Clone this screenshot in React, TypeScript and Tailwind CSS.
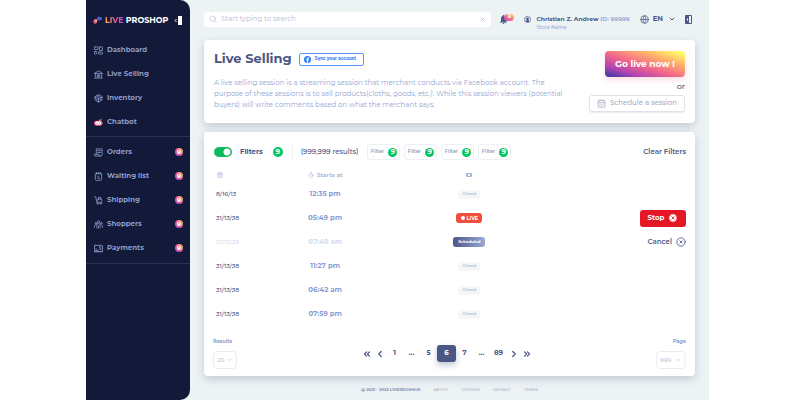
import { useState, type ReactNode } from "react";
import {
  CalendarDays,
  ChevronDown,
  ChevronLeft,
  ChevronRight,
  ChevronsLeft,
  ChevronsRight,
  CircleX,
  Globe,
  Search,
  Timer,
  X,
} from "lucide-react";

function Glyph({ children }: { children: ReactNode }) {
  return (
    <svg
      viewBox="0 0 20 20"
      className="size-[9px] shrink-0"
      fill="none"
      stroke="currentColor"
      strokeWidth="1.8"
      strokeLinecap="round"
      strokeLinejoin="round"
      aria-hidden="true"
    >
      {children}
    </svg>
  );
}

const icons = {
  dashboard: (
    <Glyph>
      <rect x="1" y="2" width="8" height="6" rx="1" />
      <rect x="12" y="2" width="7" height="8" rx="1" />
      <rect x="1" y="12" width="5" height="6" rx="1" />
      <rect x="10" y="13.500" width="9" height="4.500" rx="1" />
    </Glyph>
  ),
  selling: (
    <Glyph>
      <path d="M1 7.500 10 2l9 5.500H1ZM3 8v8M17 8v8M1 18h18M7 16v-5h6v5M10 11v5" />
    </Glyph>
  ),
  inventory: (
    <Glyph>
      <path d="M10 2 2.500 5.500v8L10 18l7.500-4.500v-8L10 2ZM1 7l9 3 9-3M10 10v8M6 4l8 4M5 12l2 1M13 13l2-1" />
    </Glyph>
  ),
  orders: (
    <Glyph>
      <path d="M5 14V2h13v13a3 3 0 0 1-3 3H4a3 3 0 0 1-3-3v-1h10v1a3 3 0 0 0 3 3M8 6h7M8 10h7" />
    </Glyph>
  ),
  waiting: (
    <Glyph>
      <rect x="3" y="3" width="14" height="15.500" rx="2" />
      <path d="M6 1v4M10 1v3M14 1v4M9 9v5h4" />
    </Glyph>
  ),
  shipping: (
    <Glyph>
      <path d="M1 2h3l2 12h12M8 11V7h9v4M10 7V3h5v4" />
      <circle cx="8" cy="17" r="1.500" />
      <circle cx="15" cy="17" r="1.500" />
    </Glyph>
  ),
  shoppers: (
    <Glyph>
      <circle cx="10" cy="4" r="2.500" />
      <circle cx="4" cy="7" r="1.500" />
      <circle cx="16" cy="7" r="1.500" />
      <path d="M6.500 18v-7a3.500 3.500 0 0 1 7 0v7M1 16v-3a3 3 0 0 1 4-3M19 16v-3a3 3 0 0 0-4-3M10 13v5" />
    </Glyph>
  ),
  payments: (
    <Glyph>
      <rect x="1" y="3" width="18" height="14" rx="1.500" />
      <path d="M4 14h5M4 11.500h2M15 6h-2.500v3H15v3h-2.500M1 17h18" />
    </Glyph>
  ),
  chatbot: (
    <svg viewBox="0 0 20 20" className="size-[9px] shrink-0" aria-hidden="true">
      <path d="M11 6 12 3l2 1 3-3-1 5-3 2Z" fill="#c98a3c" />
      <rect x="0" y="6" width="19" height="11" rx="5.500" fill="#ef5f7d" />
      <rect x="3" y="8" width="13" height="7" rx="3.500" fill="#fff" />
      <circle cx="7" cy="11.500" r="1.200" fill="#d7459a" />
      <circle cx="12" cy="11.500" r="1.200" fill="#d7459a" />
    </svg>
  ),
};

const primaryNav = [
  { label: "Dashboard", icon: icons.dashboard },
  { label: "Live Selling", icon: icons.selling },
  { label: "Inventory", icon: icons.inventory },
  { label: "Chatbot", icon: icons.chatbot },
];

const secondaryNav = [
  { label: "Orders", icon: icons.orders },
  { label: "Waiting list", icon: icons.waiting },
  { label: "Shipping", icon: icons.shipping },
  { label: "Shoppers", icon: icons.shoppers },
  { label: "Payments", icon: icons.payments },
];

type Status = "closed" | "live" | "scheduled";

const sessions: { date: string; time: string; status: Status }[] = [
  { date: "8/16/13", time: "12:35 pm", status: "closed" },
  { date: "31/13/38", time: "05:49 pm", status: "live" },
  { date: "31/13/38", time: "07:40 am", status: "scheduled" },
  { date: "31/13/38", time: "11:27 pm", status: "closed" },
  { date: "31/13/38", time: "06:42 am", status: "closed" },
  { date: "31/13/38", time: "07:59 pm", status: "closed" },
];

function NavItem({ label, icon, count }: { label: string; icon: ReactNode; count?: number }) {
  return (
    <li>
      <a href="#" className="flex h-6 items-center gap-1 pr-[7px] pl-2 text-[7px] font-bold text-[#8b9bc7]">
        {icon}
        <span>{label}</span>
        {count !== undefined && (
          <span className="ml-auto flex size-2 items-center justify-center rounded-full bg-linear-to-bl from-[#ffc65c] via-[#f2679a] to-[#9a3fc0] text-[6px] font-extrabold text-white">
            {count}
          </span>
        )}
      </a>
    </li>
  );
}

function Sidebar() {
  return (
    <aside className="w-[104px] shrink-0 rounded-r-[10px] bg-[#131939]">
      <div className="flex h-[38px] items-center gap-[3px] pt-[2px] pr-2 pl-[7px]">
        <svg viewBox="0 0 20 16" className="h-2 w-[9px] shrink-0" aria-hidden="true">
          <path d="M10 1h6a4 4 0 0 1 0 8h-4a3 3 0 0 1-3-3Z" fill="#4a59d8" />
          <path d="M1 10a3 3 0 0 1 3-3h5v4a4 4 0 0 1-8 2Z" fill="#f2668b" />
          <path d="M4 7h5v4c-3 0-5-1-5-4Z" fill="#ffb45c" />
        </svg>
        <span className="text-[8px] font-bold whitespace-nowrap text-white">
          <span className="bg-linear-to-r from-[#ffb45c] via-[#f2668b] to-[#b83fd0] bg-clip-text text-transparent">
            LIVE
          </span>{" "}
          PROSHOP
        </span>
        <button type="button" aria-label="Collapse menu" className="ml-auto flex items-center">
          <svg viewBox="0 0 8 9" className="h-[9px] w-2" aria-hidden="true">
            <path d="M2.500 3 1 4.500 2.500 6" fill="none" stroke="#fff" />
            <path d="M4 0h4v9H4Z" fill="#fff" />
          </svg>
        </button>
      </div>
      <nav aria-label="Main">
        <ul className="border-b border-[#2a3158] pb-[2px]">
          {primaryNav.map((item) => (
            <NavItem key={item.label} {...item} />
          ))}
        </ul>
        <ul className="border-b border-[#2a3158] pt-[3px] pb-[3px]">
          {secondaryNav.map((item) => (
            <NavItem key={item.label} {...item} count={9} />
          ))}
        </ul>
      </nav>
    </aside>
  );
}

function TopBar() {
  const [query, setQuery] = useState("");
  return (
    <header className="flex items-center">
      <div className="flex h-4 grow items-center gap-1 rounded-[3px] bg-white px-[5px] shadow-[inset_0_1px_1px_rgba(0,0,0,0.06)]">
        <Search className="size-2 text-[#b4bdd0]" />
        <input
          type="text"
          aria-label="Search"
          placeholder="Start typing to search"
          value={query}
          onChange={(event) => setQuery(event.target.value)}
          className="min-w-0 grow bg-transparent text-[7px] text-[#4c5685] outline-none placeholder:text-[#b4bdd0]"
        />
        <button type="button" aria-label="Clear search" onClick={() => setQuery("")}>
          <X className="size-[7px] text-[#a3aec8]" />
        </button>
      </div>
      <button type="button" aria-label="Notifications" className="relative ml-2 flex w-4">
        <svg viewBox="0 0 16 18" className="size-[9px]" fill="#4c5685" aria-hidden="true">
          <path d="M8 0a1.500 1.500 0 0 1 1.500 2A5 5 0 0 1 13 7v5l2.500 3H.5L3 12V7a5 5 0 0 1 3.500-5A1.500 1.500 0 0 1 8 0ZM6 16h4a2 2 0 0 1-4 0Z" />
        </svg>
        <span className="absolute -top-px left-[5px] flex h-[7px] w-[10px] items-center justify-center rounded-full bg-linear-to-bl from-[#ffd45c] via-[#f7778c] to-[#b93fc0] text-[5px] font-bold text-white">
          9
        </span>
      </button>
      <div className="ml-[9px] flex items-center gap-[5px]">
        <svg viewBox="0 0 14 14" className="size-[7px]" fill="none" stroke="#4c5685" strokeWidth="1.5" aria-hidden="true">
          <circle cx="7" cy="7" r="6" />
          <circle cx="7" cy="6" r="2" fill="#4c5685" />
          <path d="M5 12V9h4v3" fill="#4c5685" />
        </svg>
        <div className="relative text-[6px] leading-2 font-bold whitespace-nowrap text-[#4c5685]">
          Christian Z. Andrew <span className="text-[#9aabd6]">ID: 99999</span>
          <div className="absolute top-2 left-0 text-[5px] font-medium text-[#9aabd6]">Store Name</div>
        </div>
      </div>
      <button type="button" className="ml-[10px] flex items-center gap-1 text-[7px] font-bold text-[#4c5685]">
        <Globe className="size-[9px]" />
        EN
        <ChevronDown className="ml-px size-2" strokeWidth={3} />
      </button>
      <button type="button" aria-label="Log out" className="mr-[3px] ml-[9px]">
        <svg viewBox="0 0 14 18" className="h-[9px] w-[7px]" aria-hidden="true">
          <path d="M1 1h12v16H1Z" fill="none" stroke="#4c5685" strokeWidth="2" />
          <path d="M1 1h7v16H1Z" fill="#4c5685" />
          <path d="M5 7v4" stroke="#fff" strokeWidth="2" />
        </svg>
      </button>
    </header>
  );
}

function Intro() {
  return (
    <section className="mt-[13px] flex h-[83px] justify-between rounded-[4px] bg-white px-[10px] pt-[11px] shadow-[0_3px_8px_rgba(40,60,80,0.22)]">
      <div className="w-[355px]">
        <div className="flex h-4 items-center gap-[7px]">
          <h1 className="text-[13px] font-bold text-[#4c5685]">Live Selling</h1>
          <button
            type="button"
            className="flex h-[13px] w-[65px] items-center gap-1 rounded-[2px] border border-[#5b97f8] pl-1 font-['Roboto',sans-serif] text-[5px] font-bold whitespace-nowrap text-[#2f7cf6]"
          >
            <svg viewBox="0 0 16 16" className="size-[7px] shrink-0" aria-hidden="true">
              <circle cx="8" cy="8" r="8" fill="#2f7cf6" />
              <path d="M7 16v-6H5V7.500h2V6q0-3 3-3h1.500v2H10q-1 0-1 1v1.500h2.300L11 10H9v6Z" fill="#fff" />
            </svg>
            Sync your account
          </button>
        </div>
        <p className="mt-[10px] text-[7px] leading-[11px] text-[#93a5d3]">
          A live selling session is a streaming session that merchant conducts via Facebook account. The
          purpose of these sessions is to sell products(cloths, goods, etc.). While this session viewers
          (potential buyers) will write comments based on what the merchant says.
        </p>
      </div>
      <div className="flex flex-col items-end">
        <button
          type="button"
          className="h-[26px] w-20 rounded-[4px] bg-[linear-gradient(to_top_right,#2b3a9e_0%,#b043b4_22%,#f2668a_45%,#ffb36b_72%,#fdff66_95%)] text-[9px] font-bold text-white shadow-[0_3px_6px_rgba(255,120,130,0.25)]"
        >
          Go live now !
        </button>
        <span className="text-[8px] leading-[18px] font-medium text-[#4c5685]">or</span>
        <button
          type="button"
          className="flex h-[17px] shrink-0 items-center gap-1 rounded-[3px] border border-[#dfe2e9] px-[7px] text-[7px] font-medium whitespace-nowrap text-[#a4acbf] shadow-[0_1px_1px_rgba(0,0,0,0.08)]"
        >
          <CalendarDays className="size-[9px]" />
          Schedule a session
        </button>
      </div>
    </section>
  );
}

function StatusBadge({ status }: { status: Status }) {
  if (status === "live") {
    return (
      <span className="inline-flex h-[10px] w-[26px] items-center justify-center gap-[2px] rounded-[3px] bg-[#f04e3e] text-[5px] font-bold text-white">
        <span className="size-1 rounded-full bg-white" />
        LIVE
      </span>
    );
  }
  if (status === "scheduled") {
    return (
      <span className="inline-flex h-[10px] w-8 items-center justify-center rounded-[3px] bg-linear-to-r from-[#4c5685] to-[#9aabd6] text-[4px] font-bold text-white">
        Scheduled
      </span>
    );
  }
  return (
    <span className="inline-flex h-[9px] w-[22px] items-center justify-center rounded-[2px] bg-[#f6f6f7] text-[4px] font-semibold text-[#b9bdc6]">
      Closed
    </span>
  );
}

function Filters() {
  const [on, setOn] = useState(true);
  return (
    <div className="flex h-[18px] items-center text-[#4c5685]">
      <label className="flex items-center gap-2 pl-px text-[7px] font-bold">
        <input
          type="checkbox"
          checked={on}
          onChange={() => setOn(!on)}
          className="h-[10px] w-[18px] appearance-none rounded-full bg-[#b9c1d3] bg-[radial-gradient(circle_at_5px_5px,white_3px,transparent_4px)] checked:bg-[#0cbb5e] checked:bg-[radial-gradient(circle_at_13px_5px,white_3px,transparent_4px)]"
        />
        Filters
      </label>
      <span className="ml-[10px] flex size-[10px] items-center justify-center rounded-full bg-[#02c660] text-[7px] font-bold text-white">
        9
      </span>
      <span className="ml-[9px] border-l border-[#f0f2f6] py-[3px] pl-2 text-[7px] leading-3 font-medium">
        (999,999 results)
      </span>
      <div className="ml-[9px] flex gap-1">
        {[1, 2, 3, 4].map((id) => (
          <button
            key={id}
            type="button"
            className="flex h-4 w-[33px] items-center justify-center gap-1 rounded-[3px] border border-[#eef0f4] text-[5px] font-semibold text-[#939db8]"
          >
            Filter
            <span className="flex size-[9px] items-center justify-center rounded-full bg-[#02c660] text-[7px] font-bold text-white">
              9
            </span>
          </button>
        ))}
      </div>
      <button type="button" className="ml-auto text-[7px] font-semibold">
        Clear Filters
      </button>
    </div>
  );
}

function SessionTable() {
  return (
    <table className="mt-[6px] w-full table-fixed">
      <colgroup>
        <col className="w-[14%]" />
        <col className="w-[19%]" />
        <col className="w-[42%]" />
        <col className="w-[25%]" />
      </colgroup>
      <thead>
        <tr className="h-[15px] text-[6px] leading-2 text-[#a0b1da]">
          <th scope="col" className="p-0 pl-1 align-middle" aria-label="Date">
            <CalendarDays className="size-[6px]" />
          </th>
          <th scope="col" className="p-0 pl-[2px] align-middle font-semibold">
            <span className="flex items-center justify-center gap-[3px]">
              <Timer className="size-[6px]" />
              Starts at
            </span>
          </th>
          <th scope="col" className="p-0 pl-[2px] align-middle" aria-label="Status">
            <svg viewBox="0 0 12 8" className="mx-auto h-1 w-[6px]" fill="none" stroke="#a0b1da" strokeWidth="2" aria-hidden="true">
              <rect x="1" y="1" width="10" height="6" rx="1" />
              <path d="M3 1v6M9 1v6" />
            </svg>
          </th>
          <td />
        </tr>
      </thead>
      <tbody>
        {sessions.map((session, index) => (
          <tr
            key={index}
            className={
              session.status === "scheduled"
                ? "h-6 text-[#d5dcec]"
                : "h-6 text-[#4c5685]"
            }
          >
            <td className="p-0 pl-[3px] align-middle text-[6px] leading-2 font-medium">{session.date}</td>
            <td
              className={
                session.status === "scheduled"
                  ? "p-0 pl-[2px] text-center align-middle text-[7px] leading-2 font-bold"
                  : "p-0 pl-[2px] text-center align-middle text-[7px] leading-2 font-bold text-[#8ba0d0]"
              }
            >
              {session.time}
            </td>
            <td className="p-0 pl-[2px] text-center align-middle text-[5px] leading-none">
              <StatusBadge status={session.status} />
            </td>
            <td className="p-0 align-middle">
              {session.status === "live" && (
                <button
                  type="button"
                  className="ml-auto flex h-[17px] w-[46px] items-center justify-center gap-1 rounded-[3px] bg-[#e61725] text-[7px] font-bold text-white"
                >
                  Stop
                  <CircleX className="size-[10px] fill-white stroke-[#e61725]" />
                </button>
              )}
              {session.status === "scheduled" && (
                <button
                  type="button"
                  className="ml-auto flex items-center gap-1 text-[7px] font-semibold text-[#4c5685]"
                >
                  Cancel
                  <CircleX className="size-[10px]" />
                </button>
              )}
            </td>
          </tr>
        ))}
      </tbody>
    </table>
  );
}

const pages = ["1", "...", "5", "6", "7", "...", "89"];

function Pagination() {
  return (
    <nav aria-label="Pagination" className="flex h-[17px] items-center text-[7px] font-bold text-[#4c5685]">
      <button type="button" aria-label="First page" className="flex w-[13px] justify-center">
        <ChevronsLeft className="size-[10px]" strokeWidth={3} />
      </button>
      <button type="button" aria-label="Previous page" className="flex w-[13px] justify-center">
        <ChevronLeft className="size-[10px]" strokeWidth={3} />
      </button>
      {pages.map((page, index) =>
        page === "..." ? (
          <span key={index} className="w-[17px] text-center">
            ...
          </span>
        ) : (
          <button
            key={index}
            type="button"
            aria-current={page === "6" ? "page" : undefined}
            className={
              page === "6"
                ? "h-[17px] w-[19px] rounded-[3px] bg-[#4c5685] text-white shadow-[0_3px_6px_rgba(76,86,133,0.35)]"
                : "w-[17px] text-center"
            }
          >
            {page}
          </button>
        ),
      )}
      <button type="button" aria-label="Next page" className="flex w-[13px] justify-center">
        <ChevronRight className="size-[10px]" strokeWidth={3} />
      </button>
      <button type="button" aria-label="Last page" className="flex w-[13px] justify-center">
        <ChevronsRight className="size-[10px]" strokeWidth={3} />
      </button>
    </nav>
  );
}

function TableFooter() {
  return (
    <div className="mt-[11px]">
      <div className="flex justify-between text-[5px] leading-2 font-bold text-[#8ba0d0]">
        <label htmlFor="results">Results</label>
        <label htmlFor="page">Page</label>
      </div>
      <div className="flex items-start justify-between">
        <div className="relative mt-[6px] flex">
          <select
            id="results"
            className="h-[18px] w-6 appearance-none rounded-[4px] border border-[#eaecf1] pl-[3px] text-[6px] leading-4 font-medium text-[#c0c5d0]"
          >
            <option>20</option>
          </select>
          <ChevronDown className="pointer-events-none absolute top-[6px] right-1 size-[6px] text-[#a9b1c2]" />
        </div>
        <Pagination />
        <div className="relative mt-[6px] flex">
          <select
            id="page"
            className="h-[18px] w-[30px] appearance-none rounded-[4px] border border-[#eaecf1] pl-[3px] text-[6px] leading-4 font-medium text-[#c0c5d0]"
          >
            <option>999</option>
          </select>
          <ChevronDown className="pointer-events-none absolute top-[6px] right-[5px] size-[6px] text-[#a9b1c2]" />
        </div>
      </div>
    </div>
  );
}

export default function App() {
  return (
    <div className="min-h-screen bg-white font-['Montserrat','Inter',sans-serif]">
      <div className="mx-auto flex min-h-screen max-w-[623px] bg-[#edf2f5]">
        <Sidebar />
        <main className="min-w-0 grow px-[14px] pt-[11px]">
          <TopBar />
          <Intro />
          <section className="mt-[9px] rounded-[4px] bg-white px-[9px] pt-[11px] pb-[7px] shadow-[0_3px_8px_rgba(40,60,80,0.22)]">
            <Filters />
            <SessionTable />
            <TableFooter />
          </section>
          <footer className="mt-[10px] flex justify-center gap-[13px] text-[4px] leading-2 font-medium text-[#a9b2c6]">
            <span className="font-bold text-[#7f8bb0]">@ 2021 - 2022 LIVEPROSHOP</span>
            <a href="#">ABOUT</a>
            <a href="#">COOKIES</a>
            <a href="#">PRIVACY</a>
            <a href="#">TERMS</a>
          </footer>
        </main>
      </div>
    </div>
  );
}
